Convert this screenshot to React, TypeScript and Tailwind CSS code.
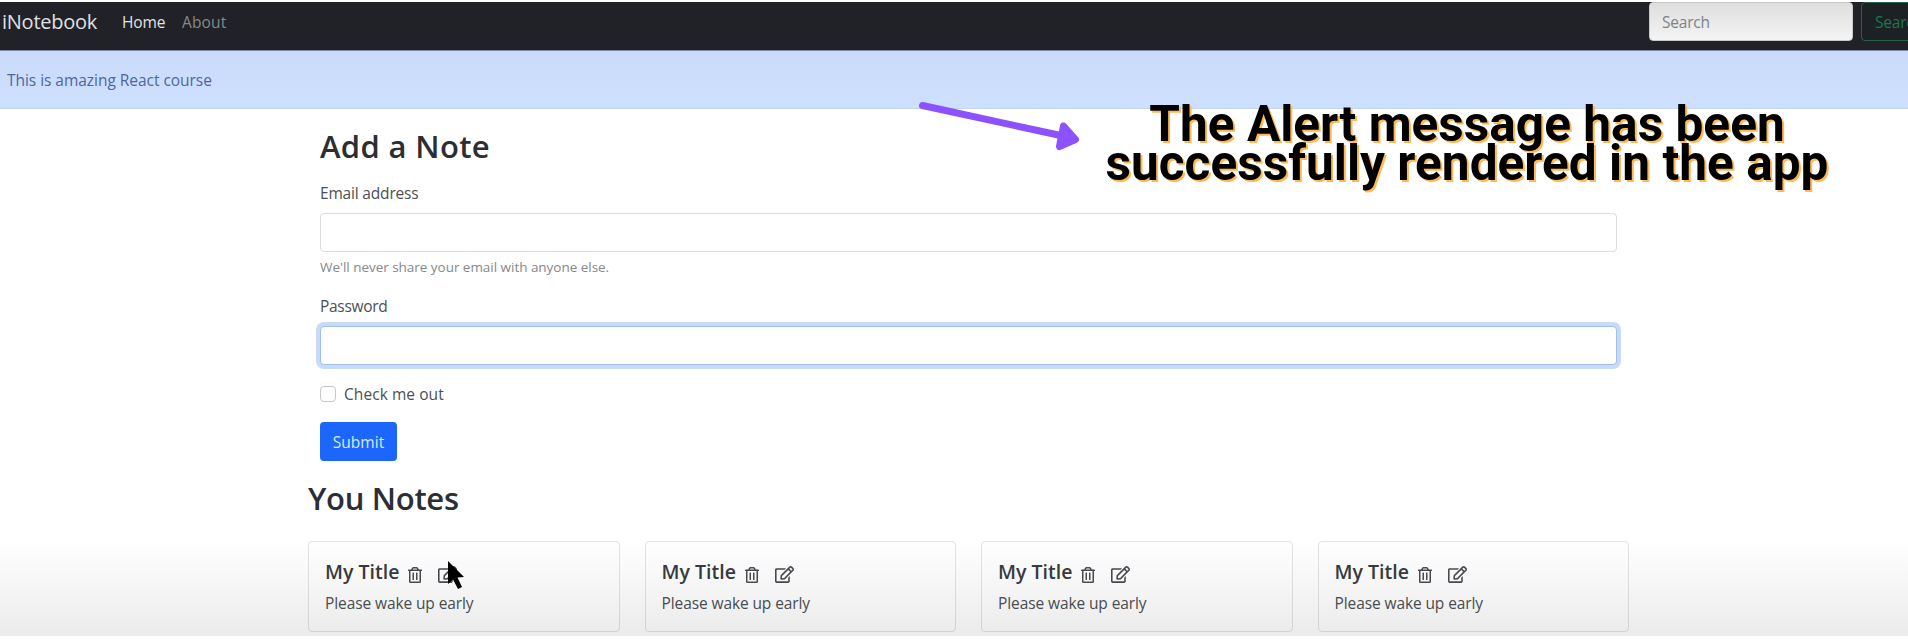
import { FaRegEdit, FaRegTrashAlt } from "react-icons/fa";

function Navbar() {
  return (
    <nav className="flex h-12 shrink-0 items-start overflow-hidden bg-[#202227]">
      <a className="ml-[2px] mt-[7px] w-[120px] text-[20px] leading-[26px] font-medium tracking-[-0.25px] text-[#e0e1e2]">iNotebook</a>
      <a className="mt-2 w-[60px] text-[15.5px] leading-6 font-medium tracking-[-0.1px] text-[#e2e2e3]">Home</a>
      <a className="mt-2 text-[15.5px] leading-6 tracking-[0.15px] text-[#87888b]">About</a>
      <form className="ml-auto flex w-[259px] shrink-0 gap-2">
        <div className="h-[39px] w-[204px] shrink-0 rounded border border-[#c9c9c9] bg-linear-to-b from-[#dedede] to-[#f4f4f4] pl-3 text-[15.5px] leading-[38px] tracking-[-0.2px] text-[#808284]">
          Search
        </div>
        <button
          type="button"
          className="h-[39px] w-[77px] shrink-0 rounded border border-[#27604b] bg-[#1c2124] pl-[13px] text-left text-[15.5px] leading-[38px] tracking-[-0.2px] text-[#1f7551]"
        >
          Search
        </button>
      </form>
    </nav>
  );
}

function NoteForm() {
  return (
    <form className="ml-3 flex w-[1297px] flex-col items-start text-[15.5px] leading-6 text-[#4c5054]">
      <h2 className="text-[31px] leading-[38px] font-semibold tracking-[0.35px] text-[#2b2e33]">Add a Note</h2>
      <label className="mt-4 tracking-[-0.18px]">Email address</label>
      <div className="mt-2 h-[39px] w-full rounded border border-[#dadcde] bg-white" />
      <p className="mt-[5px] text-[13.5px] leading-5 tracking-[-0.03px] text-[#84888c]">
        We'll never share your email with anyone else.
      </p>
      <label className="mt-[17px] tracking-[-0.3px]">Password</label>
      <div className="mt-2 h-[39px] w-full rounded border border-[#9fbfec] bg-white ring-4 ring-[#c8daf6]" />
      <div className="mt-[17px] flex items-center">
        <span className="size-4 rounded border border-[#c3c5c7] bg-white" />
        <label className="ml-2 tracking-[0.06px]">Check me out</label>
      </div>
      <button
        type="button"
        className="mt-4 h-[39px] w-[77px] rounded bg-[#1c66fb] text-center leading-[41px] tracking-[0.05px] text-[#d5ecff]"
      >
        Submit
      </button>
    </form>
  );
}

function NoteCard() {
  return (
    <div className="h-[91px] rounded border border-[#e2e3e4] bg-white px-4 pt-[18px]">
      <div className="flex h-6 text-[#4a4b52]">
        <h5 className="w-[83px] text-[19.5px] leading-6 font-semibold tracking-[0.02px] text-[#383b40]">My Title</h5>
        <FaRegTrashAlt className="mt-[7px] h-4 w-[14px]" />
        <FaRegEdit className="mt-[6px] ml-4 h-[17px] w-[19px]" />
      </div>
      <p className="mt-[7px] text-[15.5px] leading-6 tracking-[-0.1px] text-[#4c5054]">Please wake up early</p>
    </div>
  );
}

export default function App() {
  return (
    <div className="relative h-[640px] w-full overflow-hidden bg-white pt-[2px] font-['Open_Sans',sans-serif]">
      <div className="flex h-[634px] flex-col">
        <Navbar />
        <div className="h-[59px] shrink-0 border-t border-b border-t-[#7c88a4] border-b-[#c3d5ee] bg-linear-to-b from-[#cbdafa] to-[#cee0ff] pt-[17px] pl-[7px] text-[15.5px] leading-6 tracking-[-0.04px] text-[#4c66a0]">
          This is amazing React course
        </div>
        <main className="ml-[308px] flex w-[1321px] flex-col pt-[18px]">
          <NoteForm />
          <h2 className="mt-[18px] text-[31px] leading-[38px] font-semibold tracking-[-0.3px] text-[#2b2e33]">You Notes</h2>
          <div className="mt-6 grid grid-cols-4 gap-[25px]">
            <NoteCard />
            <NoteCard />
            <NoteCard />
            <NoteCard />
          </div>
        </main>
      </div>

      <div className="pointer-events-none absolute inset-x-0 top-[540px] h-24 bg-linear-to-b from-black/0 to-black/8" />

      <svg className="absolute top-[561px] left-[447px]" width="18" height="29" viewBox="0 0 18 29" fill="#000">
        <path d="M1 0v23l5-4.500 5 9.500 4-2-4.500-9.500 6.500-.5z" />
      </svg>

      <svg className="absolute top-[98px] left-[916px]" width="168" height="56" viewBox="916 98 168 56">
        <path d="M922.500 105.500 1063 136" stroke="#8c52ff" strokeWidth="7" strokeLinecap="round" />
        <path d="M1063.500 126 1075.500 139.500 1059.500 146.500z" fill="#8c52ff" stroke="#8c52ff" strokeWidth="7" strokeLinejoin="round" />
      </svg>

      <div className="absolute top-[105px] left-[1067px] w-[800px] text-center font-[Roboto,sans-serif] text-[49.5px] leading-[39px] font-bold tracking-[0.05px] text-black [text-shadow:2px_2px_0_#ffb757]">
        The Alert message has been
        <br />
        successfully rendered in the app
      </div>
    </div>
  );
}
